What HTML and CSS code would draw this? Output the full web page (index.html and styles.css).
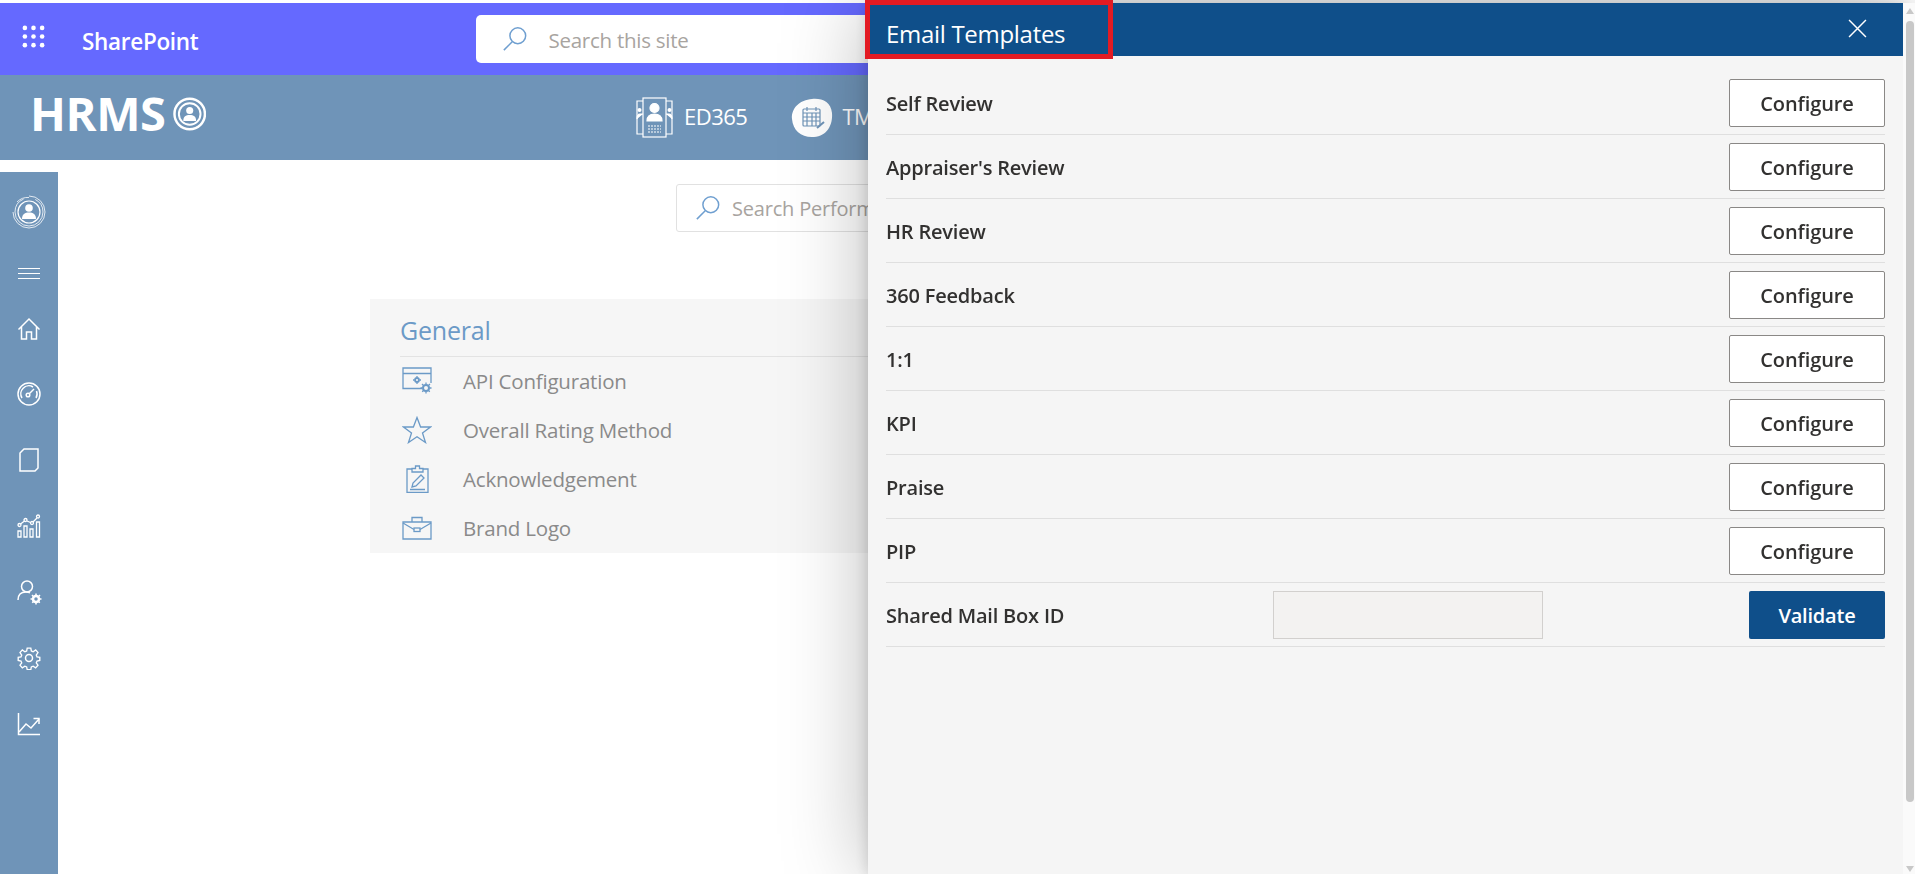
FILE: index.html
```html
<!DOCTYPE html>
<html lang="en">
<head>
    <meta charset="UTF-8">
    <meta name="viewport" content="width=device-width, initial-scale=1.0">
    <title>Email Templates - HRMS</title>
    <link rel="stylesheet" href="styles.css">
</head>
<body>
    <header class="suite-bar">
        <svg class="waffle" viewBox="0 0 24 24" fill="#fff">
            <circle cx="3" cy="3" r="2.4"/><circle cx="12" cy="3" r="2.4"/><circle cx="21" cy="3" r="2.4"/>
            <circle cx="3" cy="12" r="2.4"/><circle cx="12" cy="12" r="2.4"/><circle cx="21" cy="12" r="2.4"/>
            <circle cx="3" cy="21" r="2.4"/><circle cx="12" cy="21" r="2.4"/><circle cx="21" cy="21" r="2.4"/>
        </svg>
        <span class="suite-name">SharePoint</span>
        <div class="site-search">
            <svg class="search-icon" viewBox="0 0 28 28" fill="none" stroke="#6f9fd0" stroke-width="1.6">
                <circle cx="17" cy="10.500" r="8.500"/><path d="M11 17 2 26"/>
            </svg>
            <span class="site-search-text">Search this site</span>
        </div>
    </header>

    <nav class="app-bar">
        <div class="brand">
            <span class="brand-name">HRMS</span>
            <svg class="brand-mark" viewBox="0 0 34 34">
                <circle cx="17" cy="17" r="15.500" fill="none" stroke="#fff" stroke-width="2.500"/>
                <circle cx="17" cy="17" r="11" fill="none" stroke="#fff" stroke-width="2"/>
                <circle cx="17" cy="13.500" r="3.600" fill="#fff"/>
                <path d="M10.500 24c0-4.500 2.500-6 6.500-6s6.500 1.500 6.500 6z" fill="#fff"/>
            </svg>
        </div>
        <div class="app-link app-link-first">
            <svg class="app-icon" viewBox="0 0 37 41" fill="none" stroke="#fff" stroke-width="1.200">
                <rect x="7" y="1" width="23" height="39"/>
                <path d="M7 4H1v33h6M30 4h6v33h-6"/>
                <circle cx="18.500" cy="11" r="4.500" fill="#fff"/>
                <path d="M11 24c0-5 3-7 7.500-7s7.500 2 7.500 7z" fill="#fff"/>
                <path d="M12 29h13M12 32h13M12 35h13" stroke-dasharray="2 1"/>
                <circle cx="3.500" cy="13" r="2" fill="#fff" stroke="none"/>
                <circle cx="33.500" cy="13" r="2" fill="#fff" stroke="none"/>
                <path d="M1 22c0-3 1-5 3-5h3M36 22c0-3-1-5-3-5h-3" fill="#fff"/>
            </svg>
            <span>ED365</span>
        </div>
        <div class="app-link app-link-second">
            <svg class="app-icon-round" viewBox="0 0 43 40">
                <path d="M21 1c10-1 19 3 20 14 1 12-5 23-18 24C11 40 2 33 1 21 0 10 9 2 21 1z" fill="#fff"/>
                <g fill="none" stroke="#6f94b8" stroke-width="1.200">
                    <rect x="12" y="11" width="17" height="17" rx="1"/>
                    <path d="M12 15h17M16 9v4M25 9v4M12 19h17M12 23h17M16 15v13M21 15v13M25 15v13"/>
                    <path d="M26 30l7-6" stroke-width="2"/>
                </g>
            </svg>
            <span>TM</span>
        </div>
    </nav>

    <div class="page">
        <aside class="sidebar">
            <div class="side-logo">
                <svg viewBox="0 0 34 34" width="34" height="34" fill="none" stroke="#fff">
                    <path d="M17 1a16 16 0 1 1-16 16" stroke-width=".8"/>
                    <path d="M5 7A15 15 0 0 1 17 2.500" stroke-width=".8"/>
                    <circle cx="17" cy="17" r="14" stroke-width=".8" stroke-dasharray="60 12"/>
                    <circle cx="17" cy="17" r="11" stroke-width="1.200"/>
                    <circle cx="17" cy="13" r="3.800" fill="#fff" stroke="none"/>
                    <path d="M10 24c0-5 3-6.500 7-6.500s7 1.500 7 6.500z" fill="#fff" stroke="none"/>
                </svg>
            </div>
            <div class="side-toggle">
                <svg viewBox="0 0 22 11" width="22" height="11" stroke="#fff"><path d="M0 .5h22M0 5.500h22M0 10.500h22"/></svg>
            </div>
            <div class="side-item side-home">
                <svg viewBox="0 0 24 24" width="24" height="24" fill="none" stroke="#fff" stroke-width="1.500">
                    <path d="M1.500 12.500 12 2l10.500 10.500M4.500 10v12h5v-7h5v7h5V10"/>
                </svg>
            </div>
            <div class="side-item">
                <svg viewBox="0 0 24 24" width="24" height="24" fill="none" stroke="#fff" stroke-width="1.500">
                    <circle cx="12" cy="12" r="11"/><path d="M5 16a8 8 0 0 1 11-11"/><path d="M19.500 9a8 8 0 0 1-.5 7"/>
                    <circle cx="11" cy="13" r="1.800"/><path d="M12.500 11.500 17 7"/>
                </svg>
            </div>
            <div class="side-item">
                <svg viewBox="0 0 20 24" width="20" height="24" fill="none" stroke="#fff" stroke-width="1.500">
                    <path d="M5 1h14v19l-3 3H1V5z"/>
                </svg>
            </div>
            <div class="side-item">
                <svg viewBox="0 0 24 24" width="24" height="24" fill="none" stroke="#fff" stroke-width="1.300">
                    <path d="M1 17h3v6H1zM7 12h3v11H7zM13 15h3v8h-3zM19.500 8h3v15h-3z"/>
                    <circle cx="2.500" cy="11" r="1.500"/><circle cx="8.500" cy="6" r="1.500"/>
                    <circle cx="15" cy="9" r="1.500"/><circle cx="21" cy="2.500" r="1.500"/>
                    <path d="M3.500 10l4-3M10 7l3.500 1.500M16 8l4-4"/>
                </svg>
            </div>
            <div class="side-item">
                <svg viewBox="0 0 25 25" width="25" height="25" fill="none" stroke="#fff" stroke-width="1.500">
                    <circle cx="10" cy="6.500" r="5.500"/><path d="M1 20c0-5 3-8 8-8 1.500 0 3 .3 4 1"/>
                    <circle cx="19" cy="19" r="3" stroke-width="2.500"/>
                    <path d="M19 13.500v11M13.500 19h11M15 15l8 8M23 15l-8 8" stroke-width="1.500" stroke-dasharray="2 7"/>
                </svg>
            </div>
            <div class="side-item">
                <svg viewBox="0 0 24 24" width="24" height="24" fill="none" stroke="#fff" stroke-width="1.500">
                    <circle cx="12" cy="12" r="3.500"/>
                    <path d="M10 1h4l.6 3.200 2 .9L19.400 3l2.600 3-1.900 2.700.8 2 3.100.6v3.400l-3.100.7-.8 2 1.900 2.600-2.600 3-2.800-1.900-2 .8-.6 3.100h-4l-.6-3.100-2-.8L4.600 23 2 20l1.900-2.600-.8-2L0 14.700v-3.400l3.100-.6.800-2L2 6l2.600-3 2.800 2.100 2-.9z" transform="translate(1.200 1.200) scale(.9)"/>
                </svg>
            </div>
            <div class="side-item">
                <svg viewBox="0 0 24 24" width="24" height="24" fill="none" stroke="#fff" stroke-width="1.500">
                    <path d="M1.500 1v21.500H23"/><path d="M2 20l7-8 5 4 8-9"/><path d="M16.500 6.500H22V12"/>
                </svg>
            </div>
        </aside>

        <main class="content">
            <div class="perf-search">
                <svg class="search-icon" viewBox="0 0 28 28" fill="none" stroke="#6f9fd0" stroke-width="1.600">
                    <circle cx="17" cy="10.500" r="8.500"/><path d="M11 17 2 26"/>
                </svg>
                <span>Search Performance</span>
            </div>
            <section class="card">
                <h2 class="card-title">General</h2>
                <ul class="card-list">
                    <li>
                        <svg class="card-icon" viewBox="0 0 30 28" fill="none" stroke="#6b9ac7" stroke-width="1.300">
                            <path d="M20 21.500H1V1h28v15M1 6.500h28"/>
                            <circle cx="15" cy="13" r="2" stroke-width="1.800"/>
                            <path d="M15 9v8M11 13h8" stroke-dasharray="1.500 5"/>
                            <circle cx="24" cy="21" r="3" stroke-width="2"/>
                            <path d="M24 15.500v11M18.500 21h11M20 17l8 8M28 17l-8 8" stroke-dasharray="2 7"/>
                        </svg>
                        <span>API Configuration</span>
                    </li>
                    <li>
                        <svg class="card-icon" viewBox="0 0 30 28" fill="none" stroke="#6b9ac7" stroke-width="1.300">
                            <path d="M15 1.500l3.600 9.500H28.500l-8 6 3 9.500-8.500-5.800-8.500 5.800 3-9.500-8-6h9.900z"/>
                        </svg>
                        <span>Overall Rating Method</span>
                    </li>
                    <li>
                        <svg class="card-icon" viewBox="0 0 30 28" fill="none" stroke="#6b9ac7" stroke-width="1.300">
                            <path d="M10 4H5v23.500h21V4h-5"/>
                            <path d="M10 7V3.500h3.500V1h4v2.500H21V7z"/>
                            <path d="M10 22l1-4 8-8 3 3-8 8zM8 24.500h15"/>
                        </svg>
                        <span>Acknowledgement</span>
                    </li>
                    <li>
                        <svg class="card-icon" viewBox="0 0 30 24" fill="none" stroke="#6b9ac7" stroke-width="1.300">
                            <path d="M1 6h28v17H1zM10 6V1.500h10V6"/>
                            <path d="M1 7l11 6.500M29 7l-11 6.500"/>
                            <rect x="12" y="12" width="6" height="3.500"/>
                        </svg>
                        <span>Brand Logo</span>
                    </li>
                </ul>
            </section>
        </main>
    </div>

    <div class="overlay">
        <div class="panel">
            <div class="panel-head">
                <h1 class="panel-title">Email Templates</h1>
                <svg class="panel-close" viewBox="0 0 18 18" stroke="#fff" stroke-width="1.400"><path d="M1 1l16 16M17 1 1 17"/></svg>
            </div>
            <div class="panel-body">
                <div class="row"><span class="row-label">Self Review</span><button class="btn-config" type="button">Configure</button></div>
                <div class="row"><span class="row-label">Appraiser's Review</span><button class="btn-config" type="button">Configure</button></div>
                <div class="row"><span class="row-label">HR Review</span><button class="btn-config" type="button">Configure</button></div>
                <div class="row"><span class="row-label">360 Feedback</span><button class="btn-config" type="button">Configure</button></div>
                <div class="row"><span class="row-label">1:1</span><button class="btn-config" type="button">Configure</button></div>
                <div class="row"><span class="row-label">KPI</span><button class="btn-config" type="button">Configure</button></div>
                <div class="row"><span class="row-label">Praise</span><button class="btn-config" type="button">Configure</button></div>
                <div class="row"><span class="row-label">PIP</span><button class="btn-config" type="button">Configure</button></div>
                <div class="row">
                    <span class="row-label row-label-wide">Shared Mail Box ID</span>
                    <input class="mail-input" type="text">
                    <button class="btn-validate" type="button">Validate</button>
                </div>
            </div>
        </div>
        <div class="scrollbar">
            <div class="arrow-up"></div>
            <div class="thumb"></div>
            <div class="arrow-down"></div>
        </div>
    </div>

    <div class="red-box"></div>
</body>
</html>
```
FILE: styles.css
```css
/* page */
html, body {
    height: 100%;
}

body {
    margin: 0;
    padding-top: 3px;
    box-sizing: border-box;
    height: 874px;
    overflow: hidden;
    background-color: #fff;
    font-family: "Open Sans", "Noto Sans", sans-serif;
    display: flex;
    flex-direction: column;
}

/* top bars */
.suite-bar {
    height: 72px;
    background-color: #6569ff;
    display: flex;
    align-items: center;
    flex-shrink: 0;
}

.waffle {
    width: 23px;
    height: 23px;
    margin-left: 22px;
    margin-top: -6px;
}

.suite-name {
    margin-left: 37px;
    padding-top: 4px;
    color: #fff;
    font-size: 22.5px;
    font-weight: 600;
    letter-spacing: -0.3px;
}

.site-search {
    margin-left: 278px;
    width: 620px;
    height: 48px;
    border-radius: 5px;
    background-color: #fff;
    display: flex;
    align-items: center;
    color: #a8a4a0;
    font-size: 20.5px;
    letter-spacing: -0.25px;
}

.site-search-text {
    padding-top: 2px;
}

.search-icon {
    width: 26px;
    height: 26px;
    margin-left: 26px;
    margin-right: 20px;
    flex-shrink: 0;
}

.app-bar {
    height: 85px;
    background-color: #6f94b8;
    display: flex;
    align-items: center;
    flex-shrink: 0;
    color: #fff;
}

.brand {
    margin-left: 30px;
    margin-top: -8px;
    display: flex;
    align-items: center;
    width: 176px;
}

.brand-name {
    font-size: 47px;
    font-weight: 700;
    line-height: 1;
    letter-spacing: -0.4px;
}

.brand-mark {
    width: 34px;
    height: 34px;
    margin-left: 7px;
    margin-top: 1px;
}

.app-link {
    display: flex;
    align-items: center;
    font-size: 22px;
    letter-spacing: -0.5px;
}

.app-link-first {
    margin-left: 430px;
}

.app-link-second {
    margin-left: 44px;
}

.app-link span {
    padding-bottom: 4px;
}

.app-icon {
    width: 37px;
    height: 41px;
    margin-right: 11px;
}

.app-icon-round {
    width: 43px;
    height: 40px;
    margin-right: 8px;
}

/* left rail + content */
.page {
    flex: 1;
    display: flex;
    min-height: 0;
    padding-top: 12px;
}

.sidebar {
    width: 58px;
    flex-shrink: 0;
    background-color: #6f94b8;
    display: flex;
    flex-direction: column;
    align-items: center;
}

.side-logo {
    height: 73px;
    padding-top: 3px;
    display: flex;
    align-items: center;
}

.side-toggle {
    height: 50px;
    display: flex;
    align-items: center;
}

.side-item {
    height: 66px;
    display: flex;
    align-items: center;
    flex-shrink: 0;
}

.side-home {
    height: 63px;
    padding-bottom: 2px;
    box-sizing: border-box;
}

.content {
    flex: 1;
    padding-top: 12px;
}

.perf-search {
    margin-left: 618px;
    width: 400px;
    height: 46px;
    border: 1px solid #e1e1e1;
    border-radius: 3px;
    display: flex;
    align-items: center;
    color: #a8a4a0;
    font-size: 20px;
    letter-spacing: -0.2px;
}

.perf-search .search-icon {
    margin-left: 18px;
    margin-right: 11px;
}

.card {
    margin-left: 312px;
    margin-top: 67px;
    width: 1000px;
    height: 254px;
    box-sizing: border-box;
    padding-left: 30px;
    background-color: #f6f6f6;
}

.card-title {
    margin: 0;
    height: 58px;
    box-sizing: border-box;
    padding-top: 13px;
    border-bottom: 1px solid #e3e3e3;
    color: #6b9ac7;
    font-size: 25px;
    font-weight: 400;
    line-height: 36px;
    letter-spacing: -0.2px;
}

.card-list {
    list-style: none;
    margin: -1px 0 0;
    padding: 0;
}

.card-list li {
    height: 49px;
    display: flex;
    align-items: center;
    color: #8a8a8a;
    font-size: 20.5px;
    letter-spacing: -0.2px;
}

.card-icon {
    width: 30px;
    height: 28px;
    margin-left: 2px;
    margin-right: 31px;
    flex-shrink: 0;
}

/* email templates panel */
.overlay {
    position: fixed;
    top: 3px;
    left: 868px;
    right: 0;
    bottom: 0;
    display: flex;
}

.panel {
    flex: 1;
    background-color: #f5f5f5;
    box-shadow: 0 0 80px rgba(0, 0, 0, 0.28), 0 0 14px rgba(0, 0, 0, 0.16);
    display: flex;
    flex-direction: column;
}

.panel-head {
    height: 53px;
    flex-shrink: 0;
    background-color: #0f4f8a;
    display: flex;
    align-items: center;
    justify-content: space-between;
    padding-left: 18px;
    padding-right: 36px;
}

.panel-title {
    margin: 0;
    padding-top: 7px;
    color: #fff;
    font-size: 24px;
    font-weight: 400;
    letter-spacing: -0.3px;
}

.panel-close {
    width: 19px;
    height: 19px;
    margin-top: -2px;
}

.panel-body {
    padding: 15px 18px 0;
}

.row {
    height: 63px;
    border-bottom: 1px solid #dfdfdf;
    display: flex;
    align-items: center;
    justify-content: space-between;
}

.row-label {
    padding-top: 2px;
    color: #323130;
    font-size: 20px;
    font-weight: 600;
    letter-spacing: -0.2px;
}

.row-label-wide {
    width: 387px;
    flex-shrink: 0;
}

.btn-config {
    width: 156px;
    height: 48px;
    padding-top: 3px;
    border: 1px solid #8a8886;
    border-radius: 2px;
    background-color: #fff;
    color: #323130;
    font-family: inherit;
    font-size: 20px;
    font-weight: 600;
    letter-spacing: -0.1px;
}

.mail-input {
    width: 270px;
    height: 48px;
    box-sizing: border-box;
    border: 1px solid #d2d0ce;
    background-color: #f3f2f1;
    flex-shrink: 0;
}

.btn-validate {
    margin-left: auto;
    width: 136px;
    height: 48px;
    padding-top: 3px;
    border: none;
    border-radius: 2px;
    background-color: #0f4f8a;
    color: #fff;
    font-family: inherit;
    font-size: 20px;
    font-weight: 600;
    letter-spacing: -0.2px;
}

/* fake scrollbar strip */
.scrollbar {
    width: 12px;
    flex-shrink: 0;
    background-color: #fafafa;
    position: relative;
}

.thumb {
    position: absolute;
    top: 18px;
    left: 3px;
    width: 8px;
    height: 781px;
    border-radius: 4px;
    background-color: #c8c8c8;
}

.arrow-up,
.arrow-down {
    position: absolute;
    left: 3px;
    width: 0;
    height: 0;
    border-left: 4px solid transparent;
    border-right: 4px solid transparent;
}

.arrow-up {
    top: 5px;
    border-bottom: 6px solid #c8c8c8;
}

.arrow-down {
    bottom: 2px;
    border-top: 6px solid #c8c8c8;
}

/* annotation on the screenshot */
.red-box {
    position: fixed;
    top: 0;
    left: 865px;
    width: 248px;
    height: 59px;
    box-sizing: border-box;
    border: 5px solid #e31b23;
}
```
